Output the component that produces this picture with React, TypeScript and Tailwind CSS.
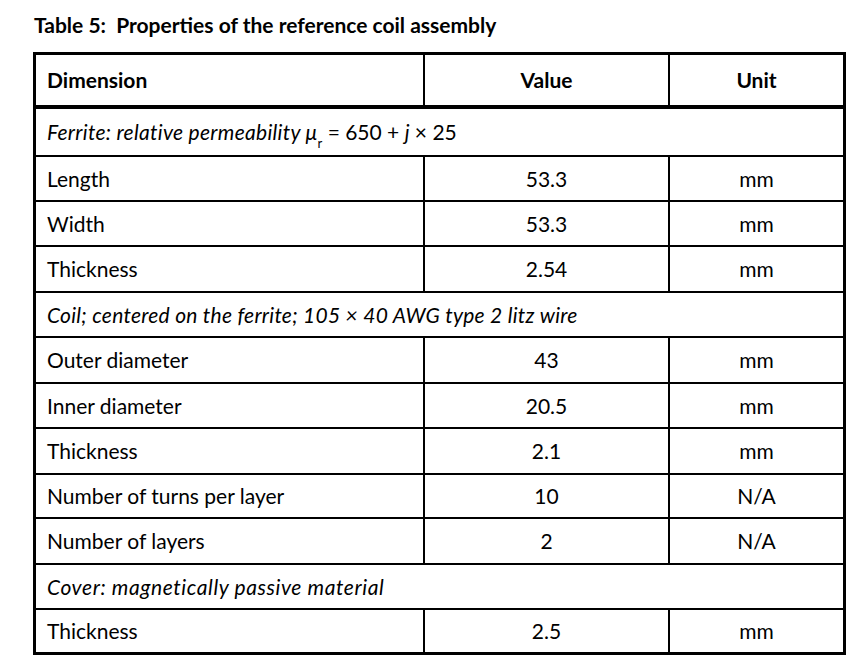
const font = { fontFamily: "Lato, 'Liberation Sans', sans-serif" };

type Row =
  | { kind: "data"; label: string; value: string; unit: string; h: string }
  | { kind: "section"; content: React.ReactNode; h: string };

// heights include the 2px bottom rule (border-box)
const rows: Row[] = [
  {
    kind: "section",
    h: "h-[48px]",
    content: (
      <>
        <span className="italic tracking-[0.3px]">Ferrite: relative permeability μ</span>
        <sub className="text-[13px] align-[-4px]">r</sub>
        <span> = 650 + </span>
        <span className="italic">j</span>
        <span> × 25</span>
      </>
    ),
  },
  { kind: "data", label: "Length", value: "53.3", unit: "mm", h: "h-[45px]" },
  { kind: "data", label: "Width", value: "53.3", unit: "mm", h: "h-[45px]" },
  { kind: "data", label: "Thickness", value: "2.54", unit: "mm", h: "h-[46px]" },
  {
    kind: "section",
    h: "h-[45px]",
    content: (
      <span className="italic tracking-[0.27px]">Coil; centered on the ferrite; 105 × 40 AWG type 2 litz wire</span>
    ),
  },
  { kind: "data", label: "Outer diameter", value: "43", unit: "mm", h: "h-[46px]" },
  { kind: "data", label: "Inner diameter", value: "20.5", unit: "mm", h: "h-[45px]" },
  { kind: "data", label: "Thickness", value: "2.1", unit: "mm", h: "h-[46px]" },
  { kind: "data", label: "Number of turns per layer", value: "10", unit: "N/A", h: "h-[44px]" },
  { kind: "data", label: "Number of layers", value: "2", unit: "N/A", h: "h-[46px]" },
  {
    kind: "section",
    h: "h-[45px]",
    content: <span className="italic tracking-[0.6px]">Cover: magnetically passive material</span>,
  },
  { kind: "data", label: "Thickness", value: "2.5", unit: "mm", h: "h-[42px]" },
];

export default function App() {
  return (
    <div className="min-h-[665px] w-[858px] bg-white text-black" style={font}>
      <div className="h-[52px] pl-[34px] pt-[12px] text-[21px] font-bold leading-[26px] whitespace-pre">
        {"Table 5:  Properties of the reference coil assembly"}
      </div>
      <div className="ml-[33px] w-[813px] border-[3px] border-black text-[21px]">
        <div className="flex h-[54px] border-b-4 border-black font-bold">
          <div className="flex w-[389px] items-center border-r-2 border-black pl-[11px]">Dimension</div>
          <div className="flex w-[245px] items-center justify-center border-r-2 border-black">Value</div>
          <div className="flex flex-1 items-center justify-center">Unit</div>
        </div>
        {rows.map((r, i) => {
          const last = i === rows.length - 1;
          if (r.kind === "section") {
            return (
              <div
                key={i}
                className={`flex items-center pl-[11px] ${r.h} ${last ? "" : "border-b-2 border-black"}`}
              >
                <div>{r.content}</div>
              </div>
            );
          }
          return (
            <div key={i} className={`flex ${r.h} ${last ? "" : "border-b-2 border-black"}`}>
              <div className="flex w-[389px] items-center border-r-2 border-black pl-[11px]">{r.label}</div>
              <div className="flex w-[245px] items-center justify-center border-r-2 border-black">{r.value}</div>
              <div className="flex flex-1 items-center justify-center">{r.unit}</div>
            </div>
          );
        })}
      </div>
    </div>
  );
}
